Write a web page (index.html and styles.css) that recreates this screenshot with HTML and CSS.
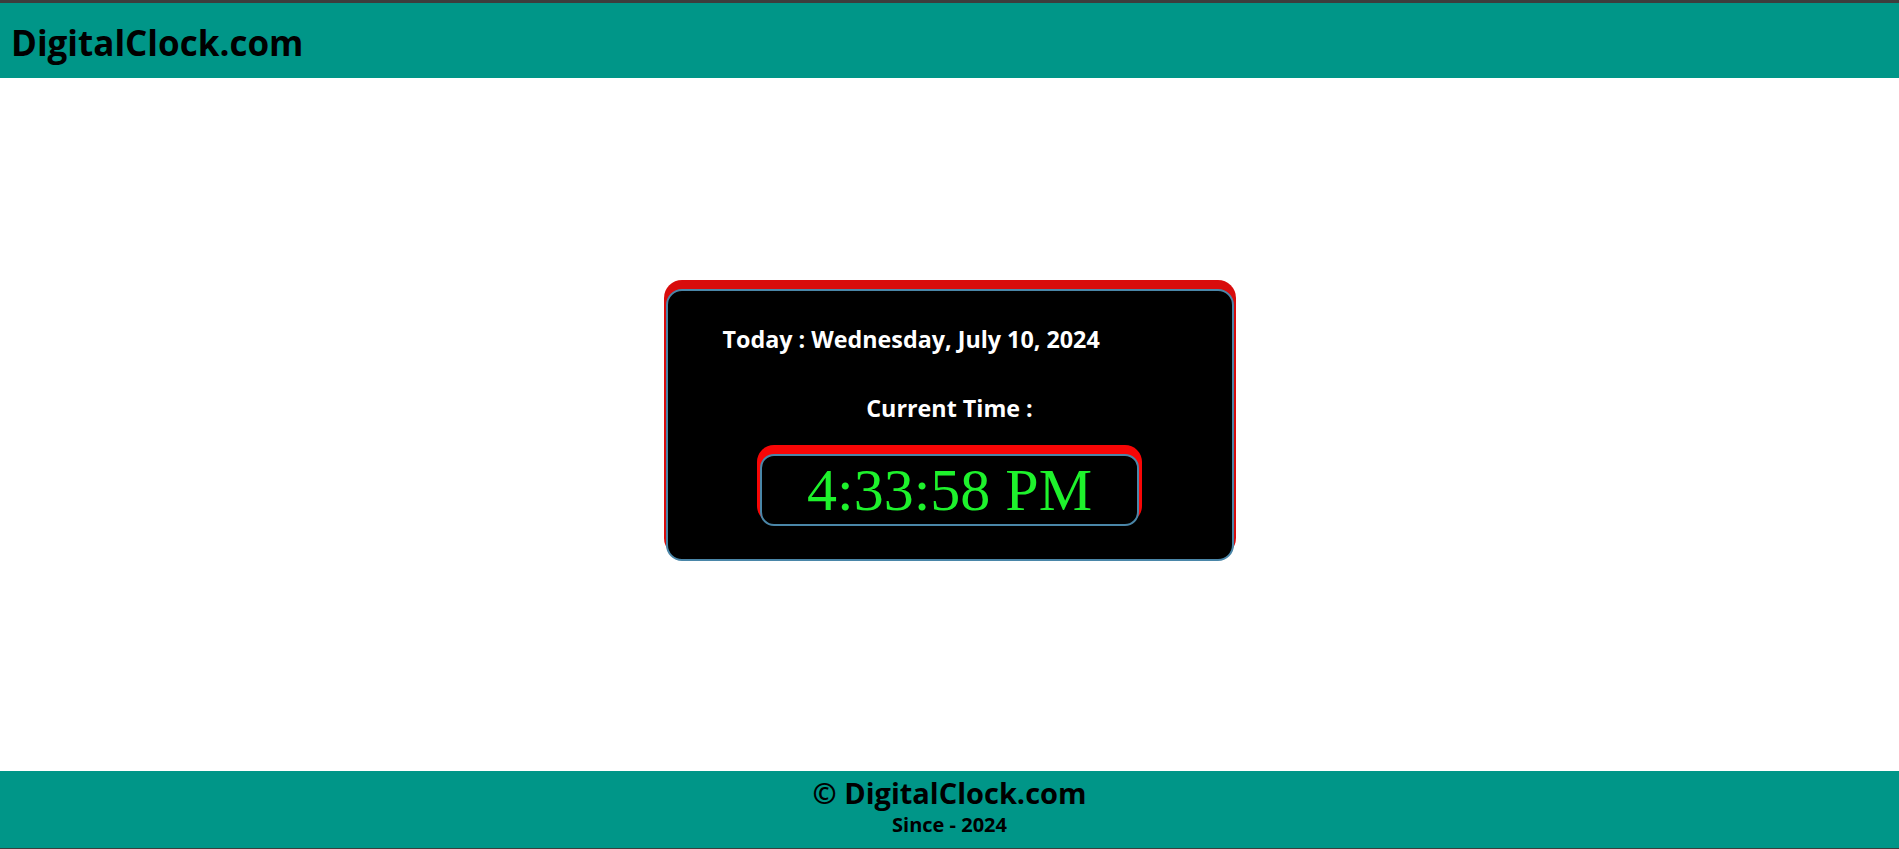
FILE: index.html
```html
<!DOCTYPE html>
<html lang="en">
<head>
<meta charset="utf-8">
<title>DigitalClock.com</title>
<link rel="stylesheet" href="styles.css">
</head>
<body>
<header class="site-header">
  <h1 class="brand">DigitalClock.com</h1>
</header>
<main class="main">
  <section class="clock-card">
    <h3 class="date">Today : Wednesday, July 10, 2024</h3>
    <h3 class="label">Current Time :</h3>
    <div class="time-box">4:33:58 PM</div>
  </section>
</main>
<footer class="site-footer">
  <div class="copy">© DigitalClock.com</div>
  <div class="since">Since - 2024</div>
</footer>
</body>
</html>
```
FILE: styles.css
```css
* { box-sizing: border-box; }
html, body { margin: 0; padding: 0; }
body {
  height: 849px;
  display: flex;
  flex-direction: column;
  font-family: "Open Sans", "Noto Sans", sans-serif;
  background: #ffffff;
}
.site-header {
  height: 78px;
  border-top: 3px solid #3d3d3d;
  background: #009688;
  display: flex;
  align-items: center;
  padding: 4px 0 0 11px;
}
.brand {
  margin: 0;
  font-size: 35px;
  font-weight: 700;
  color: #000;
  line-height: normal;
}
.main {
  flex: 1;
  display: flex;
  align-items: center;
  justify-content: center;
}
.clock-card {
  width: 568px;
  height: 272px;
  background: #000;
  border: 2px solid #4a86a8;
  border-radius: 16px;
  box-shadow: 0 -7px 0 2px #d80c0c;
  padding: 32px 0 0 55px;
  display: flex;
  flex-direction: column;
}
.date, .label {
  margin: 0;
  color: #fff;
  font-size: 23.3px;
  font-weight: 700;
  line-height: 32px;
}
.label {
  margin-top: 37px;
  margin-left: -55px;
  text-align: center;
}
.time-box {
  margin: 30px 0 0 -55px;
  align-self: center;
  width: 379px;
  height: 72px;
  border: 2px solid #4a86a8;
  border-radius: 14px;
  box-shadow: 0 -6px 0 3px #f80606;
  background: #000;
  color: #1ef22c;
  font-family: "Liberation Serif", "Times New Roman", serif;
  font-size: 60px;
  line-height: 68px;
  text-align: center;
}
.site-footer {
  height: 78px;
  background: #009688;
  border-bottom: 1px solid #3d3d3d;
  padding-top: 5px;
  text-align: center;
  color: #000;
  font-weight: 700;
}
.copy {
  font-size: 29px;
  line-height: 34px;
}
.since {
  margin-top: 3px;
  font-size: 20px;
  line-height: 24px;
}
```
